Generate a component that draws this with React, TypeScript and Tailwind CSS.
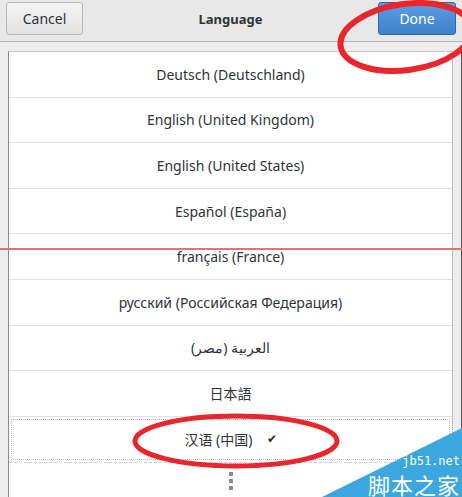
import React from 'react';

const languages = [
  'Deutsch (Deutschland)',
  'English (United Kingdom)',
  'English (United States)',
  'Español (España)',
  'français (France)',
  'русский (Российская Федерация)',
  'العربية (مصر)',
  '日本語',
];

const font = { fontFamily: '"Noto Sans", "Noto Sans CJK SC", sans-serif' };

export default function App() {
  return (
    <div
      className="relative w-[462px] h-[497px] overflow-hidden bg-[#ededed] text-[#2e3436]"
      style={font}
    >
      {/* header bar */}
      <div className="h-[42px] flex items-start justify-between px-[6px] pt-[2px] border-b border-[#b4b4b4] bg-[#e8e8e8]">
        <button className="h-[33px] w-[77px] rounded-[3px] border border-[#b8b8b8] bg-gradient-to-b from-[#f4f4f4] to-[#e2e2e2] text-[14px] text-[#2e3436]">
          Cancel
        </button>
        <div className="h-[36px] flex items-center text-[13px] font-bold">Language</div>
        <button className="h-[33px] w-[78px] rounded-[3px] border border-[#2a6bb0] bg-gradient-to-b from-[#5a9de0] to-[#3f82cc] text-[14px] text-white">
          Done
        </button>
      </div>

      {/* list */}
      <div className="flex pl-[8px] pt-[9px]">
        <div className="w-[445px] bg-white border-l border-t border-r border-l-[#8a8a8a] border-t-[#c6c6c6] border-r-[#bdbdbd]">
          {languages.map((lang) => (
            <div
              key={lang}
              className="h-[45.6px] flex items-center justify-center border-b border-[#e2e2e2] text-[14px]"
            >
              {lang}
            </div>
          ))}
          <div className="h-[46px] p-[2px] border-b border-dashed border-[#d0d0d0]">
            <div className="h-full flex items-center justify-center gap-[14px] border border-dotted border-[#b8b8b8] text-[14px]">
              <span>汉语 (中国)</span>
              <span className="text-[12px]">✔</span>
            </div>
          </div>
          <div className="flex flex-col items-center gap-[3px] pt-[9px]">
            <div className="w-[4px] h-[4px] bg-[#8a8a8a]" />
            <div className="w-[4px] h-[4px] bg-[#8a8a8a]" />
            <div className="w-[4px] h-[4px] bg-[#8a8a8a]" />
          </div>
        </div>
        <div className="ml-[8px] w-[1px] h-[460px] bg-[#555]" />
      </div>

      {/* annotations */}
      <svg className="absolute inset-0 pointer-events-none" width="462" height="497">
        <line x1="0" y1="249" x2="462" y2="249" stroke="#e87070" strokeWidth="2" />
        <ellipse cx="406" cy="37" rx="66" ry="33" fill="none" stroke="#e8262c" strokeWidth="6" transform="rotate(-8 406 37)" />
        <ellipse cx="236" cy="441" rx="101" ry="25" fill="none" stroke="#e8262c" strokeWidth="5" />
        <polygon points="322,497 462,428 462,497" fill="#3ba7de" />
      </svg>
      <div className="absolute right-[2px] bottom-[30px] text-[12px] leading-none text-white" style={{ fontFamily: '"DejaVu Sans Mono", monospace' }}>
        jb51.net
      </div>
      <div className="absolute right-[2px] bottom-[2px] text-[22px] leading-none text-white tracking-[1px]" style={{ fontFamily: '"Noto Sans CJK SC", sans-serif' }}>
        脚本之家
      </div>
    </div>
  );
}
